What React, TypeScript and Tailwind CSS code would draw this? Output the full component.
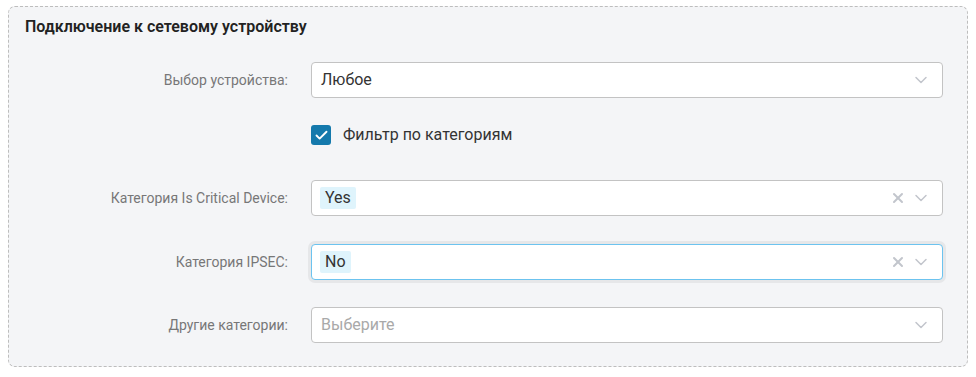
import { ChevronDown, X, Check } from 'lucide-react';

interface SelectProps {
  value?: string;
  placeholder?: string;
  tag?: boolean;
  clearable?: boolean;
  focused?: boolean;
}

function Select({ value, placeholder, tag, clearable, focused }: SelectProps) {
  return (
    <div
      className={
        'flex-1 h-[36px] flex items-center rounded-[4px] bg-white border pl-[8px] pr-[11px] ' +
        (focused
          ? 'border-[#6cc3ef] shadow-[0_0_0_3px_#e6e7e9]'
          : 'border-[#c3c3c3]')
      }
    >
      <div className="flex-1 flex items-center">
        {value && tag && (
          <span className="bg-[#dff4fc] text-[#333] text-[16px] leading-[22px] px-[5px] rounded-[2px]">
            {value}
          </span>
        )}
        {value && !tag && <span className="text-[#333] text-[16px] leading-[22px] pl-[1px]">{value}</span>}
        {!value && <span className="text-[#a9a9a9] text-[16px] leading-[22px] pl-[1px]">{placeholder}</span>}
      </div>
      {clearable && <X className="w-[16px] h-[16px] text-[#c2c5cc] mr-[5px]" strokeWidth={3} />}
      <ChevronDown className="w-[20px] h-[20px] text-[#c2c5cc]" strokeWidth={1.8} />
    </div>
  );
}

function Row({ label, children }: { label: string; children: React.ReactNode }) {
  return (
    <div className="flex items-center">
      <div className="w-[264px] text-right text-[14px] text-[#777] pr-[1px]">{label}</div>
      <div className="flex-1 flex ml-[22px]">{children}</div>
    </div>
  );
}

export default function App() {
  return (
    <div className="bg-white w-[976px] h-[377px] pt-[6px] px-[8px]" style={{ fontFamily: 'Roboto, "Noto Sans", sans-serif' }}>
      <div className="border border-dashed border-[#bdbdbd] rounded-[7px] bg-[#f4f5f7] h-[361px] pl-[16px] pr-[24px] pt-[10px]">
        <h2 className="text-[16px] leading-[20px] font-semibold text-[#222]">Подключение к сетевому устройству</h2>

        <div className="mt-[25px] flex flex-col">
          <Row label="Выбор устройства:">
            <Select value="Любое" />
          </Row>

          <div className="flex items-center mt-[27px] h-[20px] ml-[286px]">
            <span className="w-[20px] h-[20px] rounded-[3px] bg-[#1479ac] flex items-center justify-center">
              <Check className="w-[15px] h-[15px] text-white" strokeWidth={3} />
            </span>
            <span className="ml-[12px] text-[16px] text-[#333]">Фильтр по категориям</span>
          </div>

          <div className="mt-[35px]">
            <Row label="Категория Is Critical Device:">
              <Select value="Yes" tag clearable />
            </Row>
          </div>

          <div className="mt-[28px]">
            <Row label="Категория IPSEC:">
              <Select value="No" tag clearable focused />
            </Row>
          </div>

          <div className="mt-[27px]">
            <Row label="Другие категории:">
              <Select placeholder="Выберите" />
            </Row>
          </div>
        </div>
      </div>
    </div>
  );
}
